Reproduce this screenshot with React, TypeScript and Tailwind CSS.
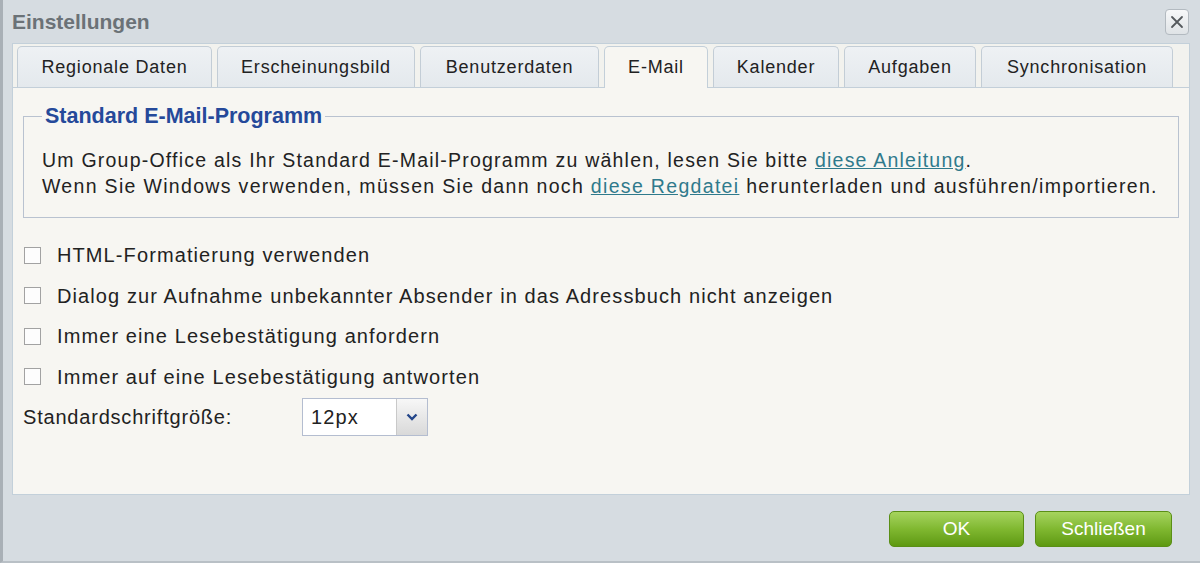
import { useState } from "react";

const tabs = [
  { label: "Regionale Daten", width: "w-[195px]" },
  { label: "Erscheinungsbild", width: "w-[198px]" },
  { label: "Benutzerdaten", width: "w-[179px]" },
  { label: "E-Mail", width: "w-[104px]" },
  { label: "Kalender", width: "w-[126px]" },
  { label: "Aufgaben", width: "w-[132px]" },
  { label: "Synchronisation", width: "w-[192px]" },
];

const options = [
  "HTML-Formatierung verwenden",
  "Dialog zur Aufnahme unbekannter Absender in das Adressbuch nicht anzeigen",
  "Immer eine Lesebestätigung anfordern",
  "Immer auf eine Lesebestätigung antworten",
];

function CloseButton() {
  return (
    <button className="flex h-[26px] w-[24px] items-center justify-center rounded-[4px] border border-[#b3bac0] bg-gradient-to-b from-[#f7f8f9] to-[#dfe3e6]">
      <svg width="14" height="14" viewBox="0 0 14 14" fill="none">
        <path d="M2 2 L12 12 M12 2 L2 12" stroke="#55595d" strokeWidth="1.8" strokeLinecap="round" />
      </svg>
    </button>
  );
}

function Checkbox({ checked, onClick }: { checked: boolean; onClick: () => void }) {
  return (
    <span
      onClick={onClick}
      className="ml-px flex h-[17px] w-[17px] shrink-0 items-center justify-center border border-[#a2a2a2] bg-[#fdfdfd]"
    >
      {checked && (
        <svg width="12" height="12" viewBox="0 0 12 12" fill="none">
          <path d="M2 6 L5 9 L10 3" stroke="#333" strokeWidth="1.8" />
        </svg>
      )}
    </span>
  );
}

export default function App() {
  const [active, setActive] = useState("E-Mail");
  const [checked, setChecked] = useState<boolean[]>([false, false, false, false]);

  return (
    <div className="flex h-[563px] w-[1200px] flex-col border-b-2 border-l-[3px] border-b-[#b9c0c6] border-l-[#a9b0b6] bg-[#d6dce1] font-['Liberation_Sans',Arial,sans-serif] text-[#222]">
      {/* title bar */}
      <div className="flex h-[43px] shrink-0 items-center justify-between pl-[9px] pr-[11px]">
        <span className="text-[21px] font-bold text-[#6b7277]">Einstellungen</span>
        <CloseButton />
      </div>

      {/* panel */}
      <div className="ml-[9px] mr-[10px] flex h-[452px] shrink-0 flex-col border border-[#c3d0da] bg-[#f7f6f2]">
        <div className="flex h-[44px] shrink-0 items-end gap-[5px] border-b border-[#c3cfd9] bg-[#f2f2ee] pl-[4px]">
          {tabs.map((t) => {
            const on = t.label === active;
            return (
              <button
                key={t.label}
                onClick={() => setActive(t.label)}
                className={
                  on
                    ? `${t.width} -mb-px flex h-[42px] items-center justify-center rounded-t-[5px] border border-b-0 border-[#c3cfd9] bg-[#f7f6f2] pb-px text-[18px] tracking-[0.8px]`
                    : `${t.width} flex h-[41px] items-center justify-center rounded-t-[5px] border border-b-0 border-[#c3cdd6] bg-gradient-to-b from-[#eef1f4] to-[#e4e9ed] text-[18px] tracking-[0.8px]`
                }
              >
                {t.label}
              </button>
            );
          })}
        </div>

        <div className="flex flex-1 flex-col px-[10px] pt-[15px]">
          <fieldset className="min-w-0 border border-[#b9c2d0] px-[18px] pb-[18px]">
            <legend className="px-[3px] text-[21.5px] font-bold leading-[26px] text-[#25499a]">
              Standard E-Mail-Programm
            </legend>
            <div className="whitespace-nowrap pt-[18px] text-[19.5px] leading-[26px] tracking-[1.22px]">
              <p>
                Um Group-Office als Ihr Standard E-Mail-Programm zu wählen, lesen Sie bitte{" "}
                <a href="#" className="text-[#2f7a8c] underline">
                  diese Anleitung
                </a>
                .
              </p>
              <p className="tracking-[1.32px]">
                Wenn Sie Windows verwenden, müssen Sie dann noch{" "}
                <a href="#" className="text-[#2f7a8c] underline">
                  diese Regdatei
                </a>{" "}
                herunterladen und ausführen/importieren.
              </p>
            </div>
          </fieldset>

          <div className="mt-[17px] flex flex-col text-[20px] tracking-[1.1px]">
            {options.map((o, i) => (
              <label key={o} className="flex h-[40.5px] items-center gap-[16px]">
                <Checkbox
                  checked={checked[i]}
                  onClick={() => setChecked(checked.map((c, j) => (j === i ? !c : c)))}
                />
                <span>{o}</span>
              </label>
            ))}
            <div className="flex h-[40.5px] items-center">
              <span className="w-[279px] tracking-[0.8px]">Standardschriftgröße:</span>
              <div className="flex h-[38px] w-[126px] border border-[#b4bdd0] bg-white">
                <span className="flex flex-1 items-center pl-[8px]">12px</span>
                <span className="flex w-[31px] items-center justify-center border-l border-[#c9c9c9] bg-gradient-to-b from-[#f7f7f7] to-[#d9d9d9]">
                  <svg width="12" height="8" viewBox="0 0 12 8" fill="none">
                    <path d="M1.5 1.5 L6 6 L10.5 1.5" stroke="#24468a" strokeWidth="2.4" />
                  </svg>
                </span>
              </div>
            </div>
          </div>
        </div>
      </div>

      {/* buttons */}
      <div className="flex flex-1 items-start justify-end gap-[11px] pr-[28px] pt-[16px]">
        <button className="h-[36px] w-[135px] rounded-[5px] border border-[#5a8f16] bg-gradient-to-b from-[#a6d45d] via-[#80b830] to-[#5e9910] text-[19px] text-white">
          OK
        </button>
        <button className="h-[36px] w-[137px] rounded-[5px] border border-[#5a8f16] bg-gradient-to-b from-[#a6d45d] via-[#80b830] to-[#5e9910] text-[19px] text-white">
          Schließen
        </button>
      </div>
    </div>
  );
}
